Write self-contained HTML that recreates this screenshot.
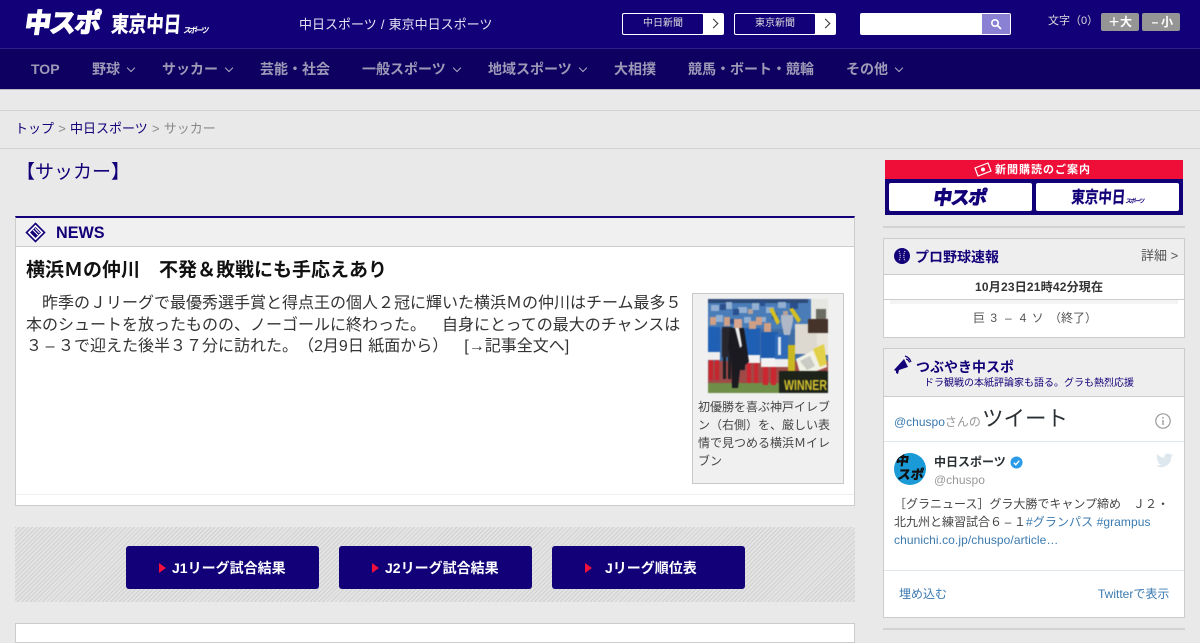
<!DOCTYPE html>
<html lang="ja"><head><meta charset="utf-8"><title>サッカー</title>
<style>
*{box-sizing:border-box}
html,body{margin:0;padding:0}
body{width:1200px;height:630px;overflow:hidden;position:relative;background:#e9e9e9;font-family:"Liberation Sans","Noto Sans CJK JP",sans-serif;color:#333;text-spacing-trim:space-all;text-autospace:no-autospace}
.a{position:absolute;white-space:nowrap}
.nav{font-size:14px;font-weight:bold;color:#9d9ab8;top:60px;line-height:18px}
.chev{position:absolute;top:65px;width:6px;height:6px;border-right:1px solid #aaa8c4;border-bottom:1px solid #aaa8c4;transform:rotate(45deg)}
.hb{position:absolute;top:13px;height:22px;width:102px;background:#fff;border:1px solid #fff;border-radius:2px;overflow:hidden}
.hb div{position:absolute;left:0;top:0;width:80px;height:20px;background:#120078;color:#ddd;font-size:10px;line-height:19px;text-align:center;border-radius:1px}
.hb i{position:absolute;left:87px;top:6px;width:7px;height:7px;border-top:1px solid #333;border-right:1px solid #333;transform:rotate(45deg)}
.lg{position:absolute;white-space:nowrap;font-weight:bold;transform-origin:left top}
.box{position:absolute;background:#fff;border:1px solid #ccc}
.btn{position:absolute;top:546px;width:193px;height:43px;background:#120078;border-radius:3px;color:#fff;font-weight:bold;font-size:14px;line-height:45px}
.btn i{position:absolute;left:33px;top:17px;width:0;height:0;border-left:7px solid #f0103c;border-top:5px solid transparent;border-bottom:5px solid transparent}
.btn span{position:absolute;top:0;white-space:nowrap}
.lnk{color:#3b7ab0}
.d{display:inline-block;width:1em;text-align:center;text-indent:0}
</style></head><body>
<div class="a" style="left:0;top:0;width:1200px;height:48px;background:#120078"></div>
<div class="a" style="left:0;top:48px;width:1200px;height:41px;background:#0e0060;border-top:1px solid #2c1f8c"></div>
<div class="a" style="left:0;top:89px;width:1200px;height:1px;background:#b9b8c8"></div>

<div class="lg" style="left:27px;top:10px;font-size:26px;line-height:27px;color:#fff;letter-spacing:-1px;transform:skewX(-8deg);-webkit-text-stroke:1.600px #fff">中スポ</div>
<div class="lg" style="left:112px;top:13px;font-size:17.500px;line-height:18px;color:#fff;transform:scaleY(1.25) skewX(-5deg);-webkit-text-stroke:.3px #fff">東京中日</div>
<div class="lg" style="left:184px;top:26px;font-size:8px;line-height:10px;color:#fff;letter-spacing:-2px;transform:skewX(-8deg)">スポーツ</div>
<div class="a" style="left:299px;top:16px;font-size:13px;line-height:18px;color:#e4e2f2;word-spacing:.5px">中日スポーツ / 東京中日スポーツ</div>

<div class="hb" style="left:622px"><div>中日新聞</div><i></i></div>
<div class="hb" style="left:734px"><div>東京新聞</div><i></i></div>
<div class="a" style="left:860px;top:13px;width:151px;height:22px;background:#fff;border-radius:2px"></div>
<div class="a" style="left:982px;top:14px;width:28px;height:20px;background:#8a80d4"></div>
<svg class="a" style="left:990px;top:18px" width="12" height="12" viewBox="0 0 12 12"><circle cx="5" cy="5" r="3.200" fill="none" stroke="#fff" stroke-width="1.600"/><path d="M7.500 7.500L11 11" stroke="#fff" stroke-width="1.800"/></svg>
<div class="a" style="left:1048px;top:13px;font-size:11px;line-height:16px;color:#ddd">文字（0）</div>
<div class="a" style="left:1101px;top:13px;width:38px;height:18px;background:#959595;border-radius:2px;color:#fff;font-weight:bold;font-size:12px;line-height:18px;text-align:center">＋大</div>
<div class="a" style="left:1142px;top:13px;width:38px;height:18px;background:#959595;border-radius:2px;color:#fff;font-weight:bold;font-size:12px;line-height:18px;text-align:center"><span class="d">–</span>小</div>

<div class="a nav" style="left:31px">TOP</div>
<div class="a nav" style="left:92px">野球</div><i class="chev" style="left:128px"></i>
<div class="a nav" style="left:162px">サッカー</div><i class="chev" style="left:226px"></i>
<div class="a nav" style="left:260px">芸能・社会</div>
<div class="a nav" style="left:362px">一般スポーツ</div><i class="chev" style="left:454px"></i>
<div class="a nav" style="left:488px">地域スポーツ</div><i class="chev" style="left:580px"></i>
<div class="a nav" style="left:614px">大相撲</div>
<div class="a nav" style="left:688px">競馬・ボート・競輪</div>
<div class="a nav" style="left:846px">その他</div><i class="chev" style="left:896px"></i>

<div class="a" style="left:0;top:110px;width:1200px;height:39px;border-top:1px solid #d2d2d2;border-bottom:1px solid #d2d2d2"></div>
<div class="a" style="left:15px;top:120px;font-size:13px;line-height:18px;color:#888;word-spacing:.6px"><span style="color:#120078">トップ</span> &gt; <span style="color:#120078">中日スポーツ</span> &gt; サッカー</div>
<div class="a" style="left:16px;top:159px;font-size:19px;line-height:28px;color:#120078">【サッカー】</div>

<div class="box" style="left:15px;top:216px;width:840px;height:290px;border-top:2px solid #120078"></div>
<div class="a" style="left:16px;top:218px;width:838px;height:29px;background:#f0f0f0;border-bottom:1px solid #ccc"></div>
<svg class="a" style="left:25px;top:222px" width="21" height="21" viewBox="0 0 21 21"><path d="M10.500 1.500L19.500 10.500 10.500 19.500 1.500 10.500Z" fill="#fff" stroke="#120078" stroke-width="1.600"/><path d="M10.500 5L16 10.500 10.500 16 5 10.500Z" fill="#120078"/><path d="M8 8l5 5M10 6.500l4.500 4.500" stroke="#fff"/></svg>
<div class="a" style="left:56px;top:224px;font-size:16.200px;line-height:18px;font-weight:bold;color:#120078">NEWS</div>
<div class="a" style="left:26px;top:258px;font-size:19px;line-height:26px;font-weight:bold;color:#111">横浜Ｍの仲川　不発＆敗戦にも手応えあり</div>
<div class="a" style="left:26px;top:293px;width:660px;white-space:normal;font-size:16px;line-height:21.500px;color:#333;text-indent:16px">昨季のＪリーグで最優秀選手賞と得点王の個人２冠に輝いた横浜Ｍの仲川はチーム最多５本のシュートを放ったものの、ノーゴールに終わった。　自身にとっての最大のチャンスは３<span class="d">–</span>３で迎えた後半３７分に訪れた。（2月9日 紙面から）　[→記事全文へ]</div>

<div class="a" style="left:692px;top:293px;width:152px;height:191px;background:#f0f0f0;border:1px solid #c8c8c8"></div>
<svg class="a" style="left:708px;top:299px;filter:blur(.5px)" width="120" height="94" viewBox="0 0 120 94">
<rect width="120" height="94" fill="#3f6da6"/>
<rect width="120" height="30" fill="#4a7cb8"/>
<path d="M0 0h100v4H0z" fill="#2d4a78"/>
<path d="M3 6h8v6H3zM18 3h6v7h-6zM30 8h9v6h-9zM44 4h7v7h-7zM58 8h8v6h-8zM70 3h8v6h-8zM8 16h7v7H8zM36 18h7v6h-7zM50 18h8v5h-8z" fill="#93b0d2"/>
<path d="M12 5h6v6h-6zM25 10h6v6h-6zM52 2h5v5h-5zM64 14h5v6h-5zM82 4h8v6h-8zM22 20h6v5h-6z" fill="#2a4f8c"/>
<path d="M40 10h5v5h-5zM75 12h5v5h-5zM2 18h5v4H2z" fill="#b5a198"/>
<rect x="103" width="17" height="30" fill="#e6e6e2"/>
<rect x="108" y="10" width="10" height="16" fill="#6b6d62"/>
<rect y="84" width="120" height="10" fill="#6f8e47"/>
<path d="M0 62h120v22H0z" fill="#a04a48"/>
<path d="M0 28h12v26H0z" fill="#1f5fb4"/><path d="M0 53h12v8H0z" fill="#eee"/>
<path d="M1 61h4v20H1zM7 61h4v20H7z" fill="#c8242e"/>
<path d="M14 28h10v30H14z" fill="#26262c"/><path d="M15 58h3v22h-3zM20 58h3v22h-3z" fill="#1d1d22"/>
<path d="M2 18h6v8H2zM16 18h6v9h-6z" fill="#cf9f86"/>
<path d="M37 29h15v27H37z" fill="#1f5fb4"/><path d="M37 56h15v8H37z" fill="#f2f2f2"/>
<path d="M39 64h4v20h-4zM46 64h4v20h-4z" fill="#cc2630"/>
<path d="M53 33h17v26H53z" fill="#1e5cb0"/><path d="M53 59h17v9H53z" fill="#f2f2f2"/>
<path d="M55 68h5v18h-5zM63 68h5v18h-5z" fill="#cc2630"/>
<path d="M67 35h13v25H67z" fill="#2e6ab8"/><path d="M70 38h3v18h-3z" fill="#dce6f2"/><path d="M67 60h13v8H67z" fill="#eee"/>
<path d="M41 22h7v8h-7zM56 24h7v9h-7zM48 18h6v8h-6z" fill="#cf9f86"/>
<path d="M22 29h14l5 34-4 3v5h-5l-2 18h-6l-1-30-3-10z" fill="#1a1a20"/>
<path d="M27 29h4l3 18-2 2z" fill="#eee"/>
<rect x="26" y="20" width="8" height="9" fill="#d9a58c"/>
<path d="M61 10l4-1 7 14-3 3z" fill="#d8c11f"/>
<path d="M81 10l4-1 8 12-3 3z" fill="#d8c11f"/>
<path d="M73 16h12v6l-3 14h-6l-3-14z" fill="#aeb8c6"/>
<path d="M80 46h7v26h-7z" fill="#c9b820"/>
<path d="M87 25h22v30H87z" fill="#ded9d0"/>
<path d="M100 20h20v14h-20z" fill="#45332a"/>
<path d="M109 34h11v22h-11z" fill="#e8e4dc"/>
<path d="M88 60l28-14 3 22-26 10z" fill="#f1f0e4"/>
<path d="M105 50l11-5 3 20-7 3z" fill="#e3d049"/>
<path d="M92 62l10-5 5 10-8 4z" fill="#c9cbc4"/>
<rect x="71" y="72" width="49" height="22" fill="#1d2319"/>
<text x="76" y="91" font-family="Liberation Sans,sans-serif" font-size="15" font-weight="bold" fill="#d8c530" textLength="43" lengthAdjust="spacingAndGlyphs">WINNER</text>
</svg>
<div class="a" style="left:698px;top:398px;width:136px;white-space:normal;font-size:12px;line-height:18px;color:#444">初優勝を喜ぶ神戸イレブン（右側）を、厳しい表情で見つめる横浜Ｍイレブン</div>
<div class="a" style="left:16px;top:494px;width:838px;height:1px;background:#efefef"></div>

<div class="a" style="left:15px;top:527px;width:840px;height:75px;background:repeating-linear-gradient(135deg,#d0d0d0 0 1px,#e4e4e4 1px 3px)"></div>
<div class="btn" style="left:126px"><i></i><span style="left:46px">J1リーグ試合結果</span></div>
<div class="btn" style="left:339px"><i></i><span style="left:46px">J2リーグ試合結果</span></div>
<div class="btn" style="left:552px"><i></i><span style="left:53px">Jリーグ順位表</span></div>
<div class="box" style="left:15px;top:623px;width:840px;height:20px"></div>

<div class="a" style="left:885px;top:160px;width:298px;height:55px;background:#120078"></div>
<div class="a" style="left:885px;top:160px;width:298px;height:19px;background:#ee0e37;color:#fff;font-size:11px;font-weight:bold;line-height:20px;padding-left:110px;letter-spacing:1px">新聞購読のご案内</div>
<svg class="a" style="left:974px;top:162px" width="18" height="15" viewBox="0 0 18 15"><path d="M1 6L14 1l3 8-13 5z" fill="#ee0e37" stroke="#fff" stroke-width="1.200"/><circle cx="9" cy="7.500" r="2" fill="#fff"/></svg>
<div class="a" style="left:889px;top:183px;width:143px;height:28px;background:#fff;border-radius:2px"></div>
<div class="lg" style="left:935px;top:188px;font-size:18.500px;line-height:19px;color:#120078;letter-spacing:-1px;transform:skewX(-8deg);-webkit-text-stroke:1px #120078">中スポ</div>
<div class="a" style="left:1036px;top:183px;width:143px;height:28px;background:#fff;border-radius:2px"></div>
<div class="lg" style="left:1072px;top:189px;font-size:13.500px;line-height:14px;color:#120078;transform:scaleY(1.25) skewX(-5deg);-webkit-text-stroke:.2px #120078">東京中日</div>
<div class="lg" style="left:1126px;top:198px;font-size:6px;line-height:8px;color:#120078;letter-spacing:-1.500px;transform:skewX(-8deg)">スポーツ</div>
<div class="a" style="left:883px;top:226px;width:302px;height:2px;background:#d2d2d2"></div>

<div class="box" style="left:883px;top:238px;width:302px;height:100px"></div>
<div class="a" style="left:884px;top:239px;width:300px;height:36px;background:#eee;border-bottom:1px solid #ccc"></div>
<svg class="a" style="left:894px;top:248px" width="16" height="16" viewBox="0 0 16 16"><circle cx="8" cy="8" r="8" fill="#120078"/><path d="M5 3c1.500 3 1.500 7 0 10M11 3c-1.500 3-1.500 7 0 10" stroke="#fff" stroke-dasharray="1 1" fill="none"/></svg>
<div class="a" style="left:915px;top:247px;font-size:14px;line-height:20px;font-weight:bold;color:#120078">プロ野球速報</div>
<div class="a" style="left:1141px;top:247px;font-size:13px;line-height:18px;color:#555">詳細 &gt;</div>
<div class="a" style="left:884px;top:275px;width:300px;height:25px;border-bottom:1px solid #ccc;background:#fff"></div>
<div class="a" style="left:975px;top:275px;font-size:12px;font-weight:bold;line-height:24px;color:#333;letter-spacing:.2px">10月23日21時42分現在</div>
<div class="a" style="left:890px;top:300px;width:288px;height:4px;background:#f4f4f4"></div>
<div class="a" style="left:973px;top:309px;font-size:12px;line-height:18px;color:#555;word-spacing:2px">巨 3 <span class="d">–</span> 4 ソ （終了）</div>

<div class="box" style="left:883px;top:348px;width:302px;height:270px"></div>
<div class="a" style="left:884px;top:349px;width:300px;height:48px;background:#eee;border-bottom:1px solid #ccc"></div>
<svg class="a" style="left:893px;top:355px" width="20" height="20" viewBox="0 0 20 20"><path d="M1 15L11 4l4 8-9 3-1 4-2-1 0-2z" fill="#120078"/><path d="M12 1c3 1 5 3 6 6M13 4c2 .5 3 1.500 3.500 3.500" stroke="#120078" fill="none" stroke-width="1.200"/></svg>
<div class="a" style="left:916px;top:357px;font-size:14px;line-height:20px;font-weight:bold;color:#120078">つぶやき中スポ</div>
<div class="a" style="left:924px;top:376px;font-size:10px;line-height:15px;color:#120078">ドラ観戦の本紙評論家も語る。グラも熱烈応援</div>
<div class="a lnk" style="left:894px;top:413px;font-size:12px;line-height:18px">@chuspo<span style="color:#999">さんの</span></div>
<div class="a" style="left:982px;top:405px;font-size:21.500px;line-height:28px;color:#292f33">ツイート</div>
<svg class="a" style="left:1155px;top:413px" width="16" height="16" viewBox="0 0 16 16"><circle cx="8" cy="8" r="7.200" fill="none" stroke="#999" stroke-width="1.200"/><path d="M8 7v5M8 4v1.600" stroke="#999" stroke-width="1.400"/></svg>
<div class="a" style="left:884px;top:441px;width:300px;height:1px;background:#e1e8ed"></div>
<div class="a" style="left:894px;top:453px;width:32px;height:32px;border-radius:50%;background:#1a9ad6;overflow:hidden"><div class="a" style="left:1px;top:1px;font-size:13px;line-height:14px;font-weight:bold;color:#111;-webkit-text-stroke:.5px #111;transform:skewX(-8deg)">中<br>&nbsp;スポ</div></div>
<div class="a" style="left:934px;top:453px;font-size:12px;line-height:18px;font-weight:bold;color:#292f33">中日スポーツ</div>
<svg class="a" style="left:1010px;top:456px" width="13" height="13" viewBox="0 0 13 13"><circle cx="6.500" cy="6.500" r="6" fill="#2b9ae8"/><path d="M3.800 6.700l2 2 3.500-4" stroke="#fff" stroke-width="1.400" fill="none"/></svg>
<div class="a" style="left:934px;top:471px;font-size:12px;line-height:18px;color:#999">@chuspo</div>
<svg class="a" style="left:1156px;top:453px" width="17" height="15" viewBox="0 0 24 20"><path d="M24 2.400a10 10 0 0 1-2.800.8 5 5 0 0 0 2.200-2.700 10 10 0 0 1-3.100 1.200 4.900 4.900 0 0 0-8.400 4.500A14 14 0 0 1 1.700.9a4.900 4.900 0 0 0 1.500 6.600 4.900 4.900 0 0 1-2.200-.6 4.900 4.900 0 0 0 3.900 4.900 5 5 0 0 1-2.200.1 4.900 4.900 0 0 0 4.600 3.400A9.900 9.900 0 0 1 0 17.300 14 14 0 0 0 21.500 4.900 10 10 0 0 0 24 2.400z" fill="#dde7ee"/></svg>
<div class="a" style="left:894px;top:495px;width:284px;white-space:normal;font-size:12px;line-height:18px;color:#444">［グラニュース］グラ大勝でキャンプ締め　Ｊ２・北九州と練習試合６<span class="d">–</span>１<span class="lnk" style="letter-spacing:.08px">#グランパス #grampus chunichi.co.jp/chuspo/article…</span></div>
<div class="a" style="left:884px;top:570px;width:300px;height:1px;background:#e1e8ed"></div>
<div class="a lnk" style="left:899px;top:585px;font-size:12px;line-height:18px">埋め込む</div>
<div class="a lnk" style="left:1098px;top:585px;font-size:12px;line-height:18px">Twitterで表示</div>
<div class="a" style="left:883px;top:628px;width:302px;height:2px;background:#d2d2d2"></div>
</body></html>
